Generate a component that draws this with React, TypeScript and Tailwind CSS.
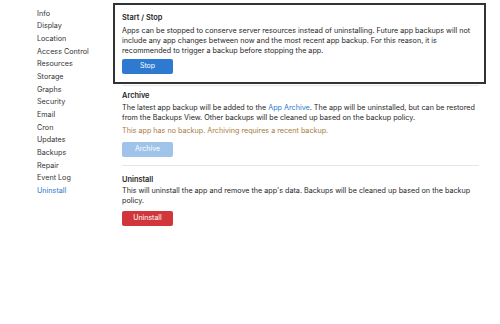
import React from 'react';

const navItems = [
  'Info',
  'Display',
  'Location',
  'Access Control',
  'Resources',
  'Storage',
  'Graphs',
  'Security',
  'Email',
  'Cron',
  'Updates',
  'Backups',
  'Repair',
  'Event Log',
  'Uninstall',
];

export default function App() {
  return (
    <div
      className="flex w-[500px] h-[324px] bg-white text-[#262626] text-[7.2px]"
      style={{ fontFamily: 'Inter, "Noto Sans", sans-serif' }}
    >
      <nav className="w-[113px] shrink-0 pl-[37px] pt-[7.7px] flex flex-col">
        {navItems.map((item) => (
          <a
            key={item}
            href="#"
            className={`leading-[12.65px] whitespace-nowrap ${item === 'Uninstall' ? 'text-[#2a78c9]' : 'text-[#333]'}`}
          >
            {item}
          </a>
        ))}
      </nav>

      <main className="w-[373px] pt-[3px] flex flex-col">
        <section className="border-2 border-[#333] px-[7px] pt-[8px] pb-[8px]">
          <h2 className="font-semibold text-[7.4px] leading-[10px]">Start / Stop</h2>
          <p className="mt-[3px] leading-[10px]">
            Apps can be stopped to conserve server resources instead of uninstalling. Future app backups will not
            include any app changes between now and the most recent app backup. For this reason, it is
            recommended to trigger a backup before stopping the app.
          </p>
          <button className="mt-[3px] w-[51px] h-[15px] rounded-[2px] bg-[#2d7ad0] text-white text-[7px]">
            Stop
          </button>
        </section>

        <div className="ml-[9px] w-[357px] mt-[1px] border-t border-[#e6e6e6]" />

        <section className="px-[9px] pt-[5px]">
          <h2 className="font-semibold text-[7.4px] leading-[10px]">Archive</h2>
          <p className="mt-[2px] leading-[10px]">
            The latest app backup will be added to the <span className="text-[#2a78c9]">App Archive</span>. The app will be uninstalled, but can be restored
            from the Backups View. Other backups will be cleaned up based on the backup policy.
          </p>
          <p className="mt-[3px] leading-[10px] text-[#a67c3c]">
            This app has no backup. Archiving requires a recent backup.
          </p>
          <button className="mt-[6px] w-[51px] h-[15px] rounded-[2px] bg-[#9fc3e9] text-white text-[7px]">
            Archive
          </button>
        </section>

        <div className="ml-[9px] w-[357px] mt-[8px] border-t border-[#e6e6e6]" />

        <section className="px-[9px] pt-[9px]">
          <h2 className="font-semibold text-[7.4px] leading-[10px]">Uninstall</h2>
          <p className="mt-[1px] leading-[10px]">
            This will uninstall the app and remove the app's data. Backups will be cleaned up based on the backup
            policy.
          </p>
          <button className="mt-[5px] w-[51px] h-[15px] rounded-[2px] bg-[#d1363b] text-white text-[7px]">
            Uninstall
          </button>
        </section>
      </main>
    </div>
  );
}
